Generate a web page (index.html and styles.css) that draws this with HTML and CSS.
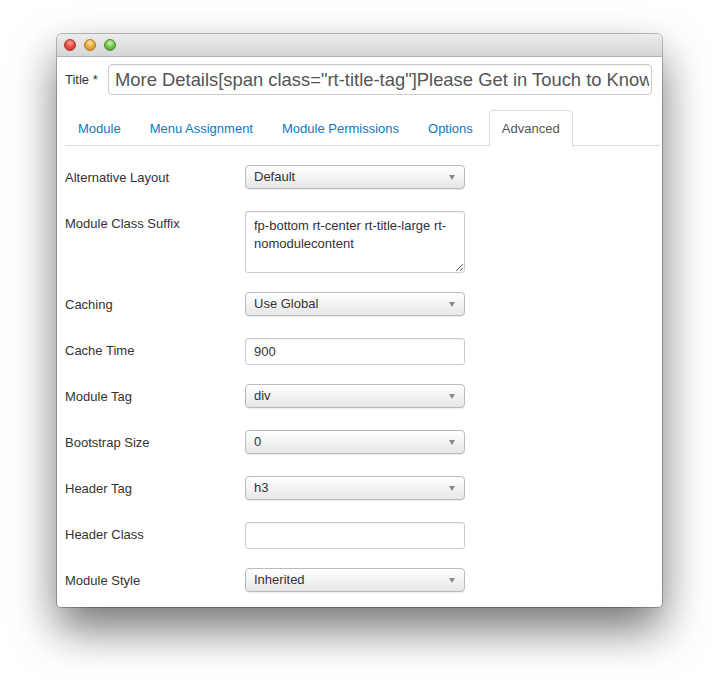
FILE: index.html
```html
<!DOCTYPE html>
<html>
<head>
<meta charset="utf-8">
<link rel="stylesheet" href="styles.css">
</head>
<body>
<div class="window">
  <div class="titlebar">
    <span class="light red"></span>
    <span class="light yellow"></span>
    <span class="light green"></span>
  </div>
  <div class="content">
    <div class="title-row">
      <label class="title-label">Title *</label>
      <input class="title-input" type="text" value="More Details[span class=&quot;rt-title-tag&quot;]Please Get in Touch to Know More[/span]">
    </div>
    <ul class="tabs">
      <li><a>Module</a></li>
      <li><a>Menu Assignment</a></li>
      <li><a>Module Permissions</a></li>
      <li><a>Options</a></li>
      <li class="active"><a>Advanced</a></li>
    </ul>
    <div class="form">
      <div class="row">
        <div class="label">Alternative Layout</div>
        <div class="select">Default<span class="caret"></span></div>
      </div>
      <div class="row">
        <div class="label">Module Class Suffix</div>
        <textarea class="textarea">fp-bottom rt-center rt-title-large rt-nomodulecontent</textarea>
      </div>
      <div class="row">
        <div class="label">Caching</div>
        <div class="select">Use Global<span class="caret"></span></div>
      </div>
      <div class="row">
        <div class="label">Cache Time</div>
        <input class="input" type="text" value="900">
      </div>
      <div class="row">
        <div class="label">Module Tag</div>
        <div class="select">div<span class="caret"></span></div>
      </div>
      <div class="row">
        <div class="label">Bootstrap Size</div>
        <div class="select">0<span class="caret"></span></div>
      </div>
      <div class="row">
        <div class="label">Header Tag</div>
        <div class="select">h3<span class="caret"></span></div>
      </div>
      <div class="row">
        <div class="label">Header Class</div>
        <input class="input" type="text" value="">
      </div>
      <div class="row last">
        <div class="label">Module Style</div>
        <div class="select">Inherited<span class="caret"></span></div>
      </div>
    </div>
  </div>
</div>
</body>
</html>
```

FILE: styles.css
```css
html, body {
  margin: 0;
  padding: 0;
  background: #ffffff;
}
body {
  font-family: "Liberation Sans", Arial, sans-serif;
  font-size: 13px;
  color: #333;
  padding: 34px 0 0 57px;
  height: 686px;
  box-sizing: border-box;
  overflow: hidden;
}
.window {
  width: 605px;
  background: #fff;
  border-radius: 5px 5px 4px 4px;
  box-shadow: 0 0 0 1px rgba(0,0,0,0.25), 0 22px 45px rgba(0,0,0,0.55);
  overflow: hidden;
}
.titlebar {
  height: 23px;
  background: linear-gradient(#ececec, #d6d6d6);
  border-bottom: 1px solid #b4b4b4;
  display: flex;
  align-items: center;
  padding-left: 7px;
  gap: 8px;
  box-sizing: border-box;
}
.light {
  width: 12px;
  height: 12px;
  border-radius: 50%;
  box-sizing: border-box;
}
.red {
  background: radial-gradient(circle at 50% 30%, #ff9c95 0%, #e2463f 55%, #b8302b 100%);
  border: 1px solid #a8322d;
}
.yellow {
  background: radial-gradient(circle at 50% 30%, #ffe39a 0%, #e5a635 55%, #c0821f 100%);
  border: 1px solid #b07a22;
}
.green {
  background: radial-gradient(circle at 50% 30%, #c8f3a0 0%, #6cbd4c 55%, #4b9532 100%);
  border: 1px solid #4c8a33;
}
.content {
  padding: 7px 2px 12px 8px;
}
.title-row {
  display: flex;
  align-items: center;
  height: 31px;
}
.title-label {
  width: 43px;
  font-size: 13px;
  color: #333;
}
.title-input {
  width: 544px;
  height: 31px;
  box-sizing: border-box;
  border: 1px solid #ccc;
  border-radius: 4px;
  padding: 0 2px 0 6px;
  font-family: "Liberation Sans", Arial, sans-serif;
  font-size: 18.4px;
  color: #555;
  box-shadow: inset 0 1px 1px rgba(0,0,0,0.075);
  outline: none;
}
.tabs {
  list-style: none;
  margin: 15px 0 18px 0;
  padding: 0;
  display: flex;
  border-bottom: 1px solid #ddd;
  height: 35px;
}
.tabs li {
  margin-right: 3px;
}
.tabs a {
  display: block;
  padding: 8px 12px;
  line-height: 19px;
  color: #0a7ac4;
  border: 1px solid transparent;
  border-radius: 4px 4px 0 0;
}
.tabs .active a {
  color: #555;
  background: #fff;
  border-color: #ddd #ddd transparent;
}
.form {
  display: flex;
  flex-direction: column;
}
.row {
  display: flex;
  align-items: flex-start;
  min-height: 28px;
  margin-bottom: 18px;
}
.row.last {
  margin-bottom: 0;
}
.label {
  width: 180px;
  line-height: 27px;
  color: #333;
}
.select {
  position: relative;
  margin-top: 1px;
  width: 220px;
  height: 24px;
  box-sizing: border-box;
  border: 1px solid #bbb;
  border-radius: 4px;
  background: linear-gradient(#ffffff, #f4f4f4 50%, #e6e6e6);
  box-shadow: 0 1px 1px rgba(0,0,0,0.08);
  padding-left: 8px;
  line-height: 22px;
  color: #333;
}
.caret {
  position: absolute;
  right: 9px;
  top: 9px;
  width: 0;
  height: 0;
  border-left: 3.5px solid transparent;
  border-right: 3.5px solid transparent;
  border-top: 5px solid #888;
}
.textarea {
  margin: 1px 0 0 0;
  width: 220px;
  height: 62px;
  box-sizing: border-box;
  border: 1px solid #ccc;
  border-radius: 3px;
  padding: 5px 8px;
  font-family: "Liberation Sans", Arial, sans-serif;
  font-size: 13px;
  line-height: 18px;
  color: #333;
  box-shadow: inset 0 1px 1px rgba(0,0,0,0.075);
  outline: none;
  display: block;
}
.input {
  margin: 1px 0 0 0;
  width: 220px;
  height: 27px;
  box-sizing: border-box;
  border: 1px solid #ccc;
  border-radius: 3px;
  padding: 0 8px;
  font-family: "Liberation Sans", Arial, sans-serif;
  font-size: 13px;
  color: #333;
  box-shadow: inset 0 1px 1px rgba(0,0,0,0.075);
  outline: none;
}
```
